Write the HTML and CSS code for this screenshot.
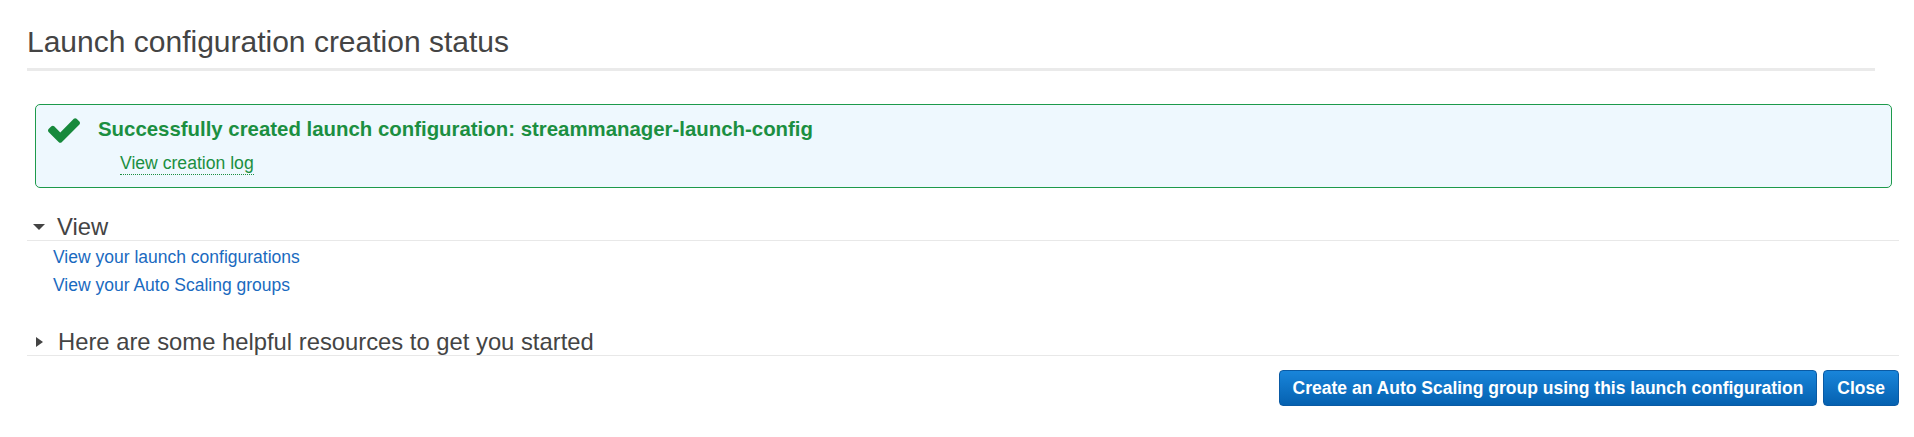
FILE: index.html
```html
<!DOCTYPE html>
<html>
<head lang="en">
    <meta charset="UTF-8">
    <title>Launch configuration creation status</title>
    <link rel="stylesheet" href="styles.css">
</head>
<body>
<div class="page">
    <h1 class="title">Launch configuration creation status</h1>

    <div class="alert">
        <svg class="check" viewBox="121 334 1550 1188" width="32" height="25">
            <path d="M1671 566q0 40-28 68l-724 724-136 136q-28 28-68 28t-68-28l-136-136-362-362q-28-28-28-68t28-68l136-136q28-28 68-28t68 28l294 295 656-657q28-28 68-28t68 28l136 136q28 28 28 68z"/>
        </svg>
        <div class="alert-body">
            <div class="alert-title">Successfully created launch configuration: streammanager-launch-config</div>
            <a class="log-link" href="javascript:void(0)">View creation log</a>
        </div>
    </div>

    <div class="section open">
        <div class="section-head"><span class="caret"></span>View</div>
        <ul class="links">
            <li><a href="javascript:void(0)">View your launch configurations</a></li>
            <li><a href="javascript:void(0)">View your Auto Scaling groups</a></li>
        </ul>
    </div>

    <div class="section">
        <div class="section-head"><span class="caret"></span>Here are some helpful resources to get you started</div>
    </div>

    <div class="actions">
        <button class="btn">Create an Auto Scaling group using this launch configuration</button>
        <button class="btn">Close</button>
    </div>
</div>
</body>
</html>
```

FILE: styles.css
```css
*{
    margin: 0;
    padding: 0;
    box-sizing: border-box;
}
body{
    background: #fff;
    font-family: "Liberation Sans", Arial, sans-serif;
    color: #444;
}
li{
    list-style: none;
}
a{
    text-decoration: none;
}
.page{
    padding: 25px 15px 0 27px;
}
.title{
    margin-right: 24px;
    padding-bottom: 9px;
    font-size: 30px;
    line-height: 34px;
    font-weight: normal;
    color: #444;
    border-bottom: 3px solid #eaeaea;
}
.alert{
    display: flex;
    margin: 33px 7px 0 8px;
    padding: 12px;
    border: 1px solid #1d9a4b;
    border-radius: 5px;
    background: #eef8fe;
}
.alert .check{
    flex: none;
    margin-top: 1px;
    fill: #17893c;
}
.alert-body{
    display: flex;
    flex-direction: column;
    align-items: flex-start;
    margin-left: 18px;
}
.alert-title{
    font-size: 20.4px;
    line-height: 24px;
    font-weight: bold;
    color: #1b8f41;
}
.log-link{
    margin: 12px 0 0 22px;
    font-size: 17.6px;
    line-height: 21px;
    color: #1b8f41;
    border-bottom: 1px dotted #1b8f41;
}
.section{
    margin-top: 25px;
}
.section + .section{
    margin-top: 29px;
}
.section-head{
    display: flex;
    align-items: center;
    font-size: 23.8px;
    line-height: 27px;
    color: #444;
    border-bottom: 1px solid #e8e8e8;
}
.caret{
    width: 0;
    height: 0;
    margin: 0 15px 0 9px;
    border-top: 5px solid transparent;
    border-bottom: 5px solid transparent;
    border-left: 7px solid #444;
}
.open .caret{
    margin: 0 12px 0 6px;
    border-top: 6px solid #444;
    border-left: 6px solid transparent;
    border-right: 6px solid transparent;
    border-bottom: 0;
}
.links{
    margin-top: 2px;
    padding-left: 26px;
}
.links li{
    font-size: 17.5px;
    line-height: 28px;
}
.links a{
    color: #1a6ac0;
}
.actions{
    display: flex;
    justify-content: flex-end;
    gap: 6px;
    margin-top: 14px;
}
.btn{
    height: 36px;
    padding: 0 13px;
    font-family: "Liberation Sans", Arial, sans-serif;
    font-size: 17.5px;
    line-height: 34px;
    font-weight: bold;
    color: #fff;
    border: 1px solid #0a5aa4;
    border-radius: 4px;
    background: linear-gradient(#1985da, #0561b0);
    cursor: pointer;
}
```
